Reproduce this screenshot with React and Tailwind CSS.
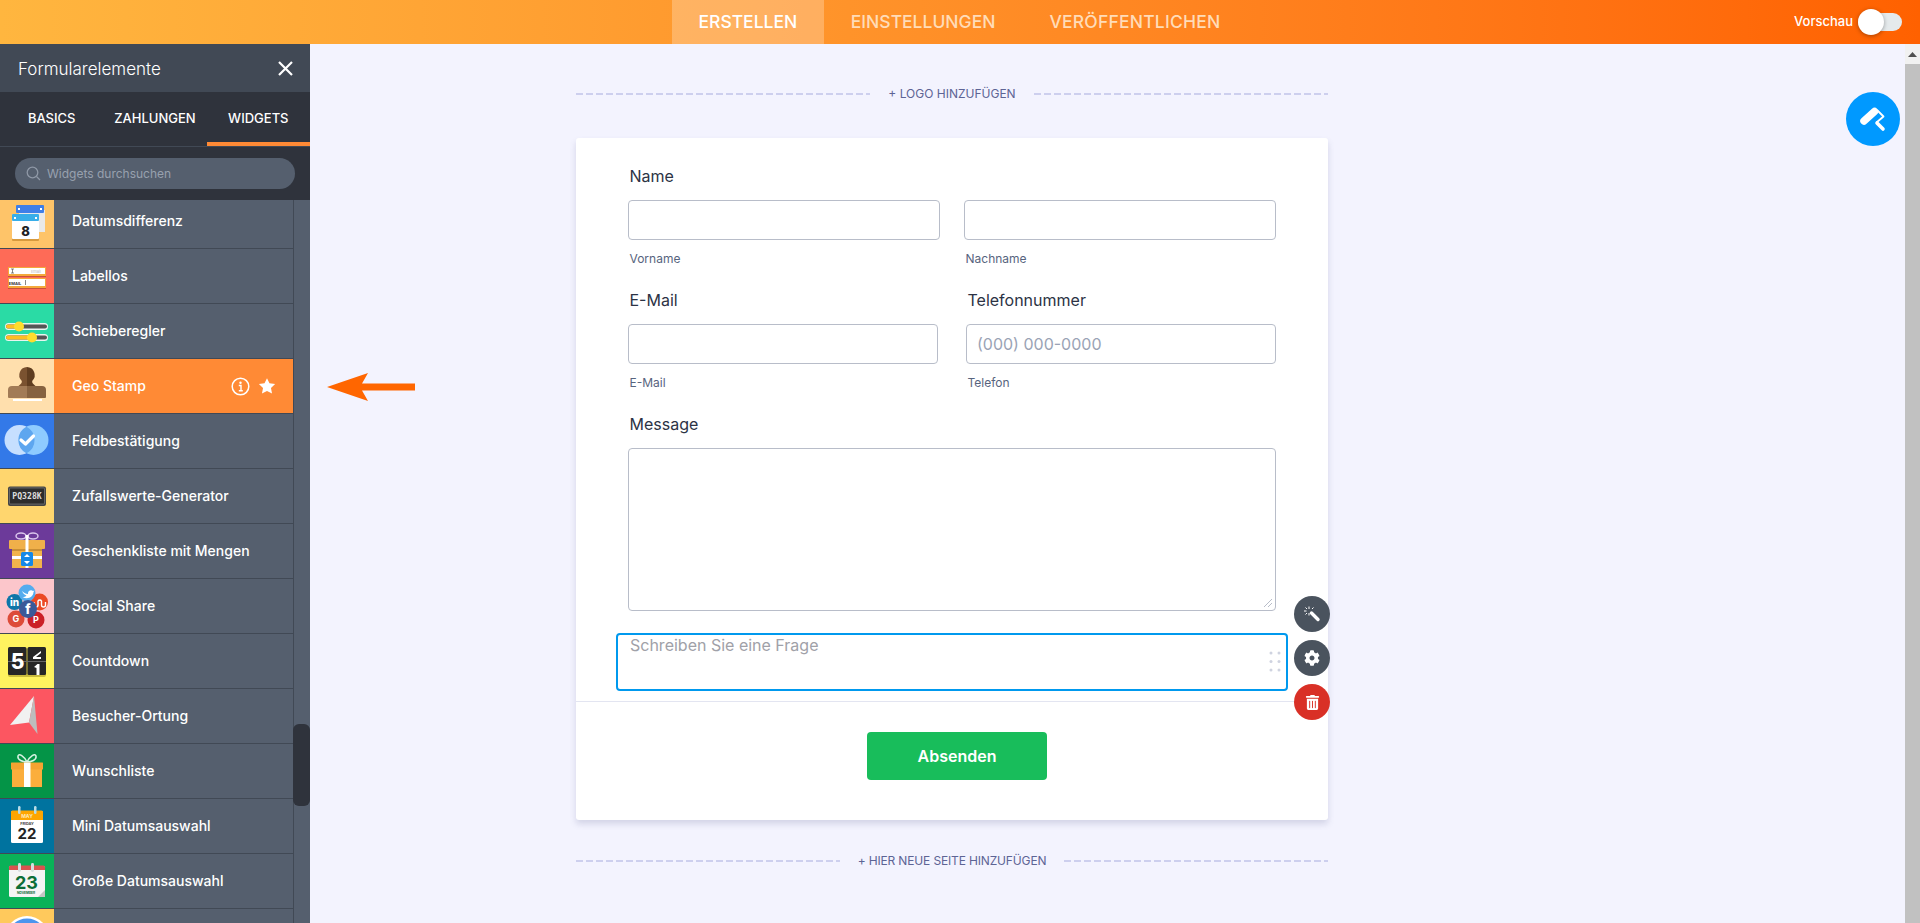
import React from "react";
import { FaCog, FaTrashAlt } from "react-icons/fa";

const Svg = ({ children }) => (
  <svg width="54" height="54" viewBox="0 0 54 54" className="-mt-px block">{children}</svg>
);

const IconDate = () => (
  <Svg>
    <rect x="19" y="17" width="26" height="22" fill="#e9e9e9" />
    <rect x="16" y="12" width="28" height="8" rx="1" fill="#3f7fe8" />
    <rect x="18" y="15" width="2" height="2" fill="#fff" />
    <rect x="40" y="15" width="2" height="2" fill="#fff" />
    <rect x="12" y="21" width="27" height="27" rx="1" fill="#d79a3e" />
    <rect x="12" y="21" width="27" height="25" rx="1" fill="#fff" />
    <rect x="12" y="21" width="27" height="7" rx="1" fill="#38aee9" />
    <rect x="14" y="24" width="2" height="2" fill="#fff" />
    <rect x="35" y="24" width="2" height="2" fill="#fff" />
    <text x="25.5" y="43" textAnchor="middle" fontSize="13" fontWeight="800" fill="#222" fontFamily="Inter, sans-serif">8</text>
  </Svg>
);

const IconLabel = () => (
  <Svg>
    <rect x="8" y="19" width="38" height="9" fill="#f4a83a" />
    <rect x="9" y="20" width="36" height="6" fill="#fff" />
    <rect x="8" y="28" width="38" height="1" fill="#c9503b" />
    <rect x="8" y="30" width="38" height="10" fill="#f4a83a" />
    <rect x="9" y="31" width="36" height="7" fill="#fff" />
    <rect x="8" y="40" width="38" height="1" fill="#c9503b" />
    <path d="M11 21h3M12.500 21v4M11 25h3" stroke="#555" strokeWidth="0.7" fill="none" />
    <text x="36" y="25" textAnchor="middle" fontSize="4" fill="#bbb" fontFamily="Inter, sans-serif">Email</text>
    <text x="15" y="36.500" textAnchor="middle" fontSize="4" fontWeight="700" fill="#333" fontFamily="Inter, sans-serif">EMAIL</text>
    <rect x="25" y="32" width="0.7" height="5" fill="#555" />
  </Svg>
);

const IconSlider = () => (
  <Svg>
    <rect x="5" y="20" width="43" height="7" rx="3.500" fill="#e8f5f0" />
    <rect x="6" y="21.500" width="41" height="4" rx="2" fill="#555" />
    <rect x="6" y="21.500" width="14" height="4" rx="2" fill="#ffbe22" />
    <circle cx="19" cy="23.500" r="5" fill="#ffdc2e" />
    <rect x="5" y="31" width="43" height="7" rx="3.500" fill="#e8f5f0" />
    <rect x="6" y="32.500" width="41" height="4" rx="2" fill="#555" />
    <rect x="6" y="32.500" width="27" height="4" rx="2" fill="#ffbe22" />
    <circle cx="32" cy="34.500" r="5" fill="#ffdc2e" />
  </Svg>
);

const IconGeo = () => (
  <Svg>
    <path d="M27 9a8 8 0 0 0-5.500 13.500c1 1.500 0 3-3 5.500h8.500z" fill="#7a5230" />
    <path d="M27 9a8 8 0 0 1 5.500 13.500c-1 1.500 0 3 3 5.500h-8.500z" fill="#5f3d20" />
    <path d="M27 28H12q-4 0-4 4v7q0 1 1 1h18z" fill="#a27b56" />
    <path d="M27 28h15q4 0 4 4v7q0 1-1 1H27z" fill="#866240" />
    <rect x="13" y="41" width="29" height="2" fill="#fff" />
  </Svg>
);

const IconField = () => (
  <Svg>
    <circle cx="19.500" cy="27" r="15" fill="#c6dfff" />
    <circle cx="33.500" cy="27" r="15" fill="#8ecbff" />
    <path d="M26.500 13.700a15 15 0 0 1 0 26.600a15 15 0 0 1 0-26.600z" fill="#5ea6ef" />
    <path d="M21 27l4.500 4 8-8" stroke="#fff" strokeWidth="3.200" fill="none" strokeLinecap="round" strokeLinejoin="round" />
  </Svg>
);

const IconRandom = () => (
  <Svg>
    <rect x="8" y="18.500" width="38" height="19.500" rx="2" fill="#444" />
    <rect x="9.500" y="20" width="35" height="16" rx="1" fill="#2d2d2d" stroke="#888" strokeWidth="0.6" />
    <text x="27" y="31" textAnchor="middle" fontSize="8.200" fontWeight="700" fill="#ddd" fontFamily="'DejaVu Sans Mono', monospace">PQ328K</text>
  </Svg>
);

const IconGift = () => (
  <Svg>
    <ellipse cx="21" cy="13" rx="5" ry="3" fill="none" stroke="#d9c4ec" strokeWidth="1.500" />
    <ellipse cx="33" cy="13" rx="5" ry="3" fill="none" stroke="#d9c4ec" strokeWidth="1.500" />
    <rect x="9" y="17" width="36" height="9" rx="1" fill="#f0b04a" />
    <rect x="12" y="26" width="30" height="19" fill="#f2b34c" />
    <rect x="12" y="26" width="30" height="2" fill="#c98f35" />
    <rect x="12" y="33" width="30" height="3" fill="#fff" />
    <rect x="25.500" y="12" width="3" height="33" fill="#fff" />
    <rect x="21" y="29" width="12" height="14" rx="1.500" fill="#1688e8" />
    <path d="M27 31l3 3h-6zM27 41l3-3h-6z" fill="#fff" />
  </Svg>
);

const IconSocial = () => (
  <Svg>
    <circle cx="16" cy="41" r="8.500" fill="#dd4b39" />
    <text x="16" y="44" textAnchor="middle" fontSize="9" fontWeight="700" fill="#fff" fontFamily="Inter, sans-serif">G</text>
    <circle cx="36" cy="42" r="8.500" fill="#cb2027" />
    <text x="36" y="45" textAnchor="middle" fontSize="9" fontWeight="700" fill="#fff" fontFamily="Inter, sans-serif">P</text>
    <circle cx="14.500" cy="24" r="8" fill="#0e76a8" />
    <text x="14.500" y="28" textAnchor="middle" fontSize="10" fontWeight="800" fill="#fff" fontFamily="Inter, sans-serif">in</text>
    <circle cx="39.500" cy="24" r="8.500" fill="#eb4924" />
    <path d="M34 24v3a2 2 0 0 0 4 0v-4a2 2 0 0 1 3.500 0v4a2 2 0 0 0 4 0v-3" stroke="#fff" strokeWidth="1.400" fill="none" />
    <circle cx="27" cy="15" r="8.500" fill="#55acee" />
    <path d="M22 13c2 2 4 3 6 3c-.5-3 3-5 5-3l1.500-.5l-1 1.500c0 5-6 8-11 5c2 0 3-.5 4-1.500c-2-.5-4-3-4.500-4.500z" fill="#fff" />
    <circle cx="28" cy="31" r="9" fill="#3b5998" />
    <text x="28" y="36" textAnchor="middle" fontSize="13" fontWeight="800" fill="#fff" fontFamily="Inter, sans-serif">f</text>
  </Svg>
);

const IconCountdown = () => (
  <Svg>
    <rect x="8" y="16" width="38" height="28" rx="2" fill="#c9bb3c" />
    <rect x="8" y="14" width="18.500" height="28" rx="1.500" fill="#262626" />
    <rect x="27.500" y="14" width="18.500" height="28" rx="1.500" fill="#262626" />
    <rect x="8" y="28" width="38" height="1" fill="#666" />
    <text x="17.500" y="36" textAnchor="middle" fontSize="21" fontWeight="800" fill="#fff" fontFamily="Inter, sans-serif">5</text>
    <path d="M33 24l8-6v2l-5 4h5v2h-8z" fill="#fff" />
    <path d="M34 34l3.500-3h2v11h-3v-7z" fill="#fff" />
  </Svg>
);

const IconVisitor = () => (
  <Svg>
    <path d="M34 8L10 37L29 34.500z" fill="#f1f1f1" />
    <path d="M34 8L29 34.500L37.500 46z" fill="#bdbdbd" />
  </Svg>
);

const IconWish = () => (
  <Svg>
    <path d="M27 19c-3-6-8-9-9-6c-1 4 5 6 9 6zM27 19c3-6 8-9 9-6c1 4-5 6-9 6z" fill="none" stroke="#d7f2e2" strokeWidth="1.500" />
    <rect x="12" y="26" width="30" height="19" fill="#128a45" />
    <rect x="12" y="26" width="30" height="18" fill="#fbae3c" />
    <rect x="11" y="19.500" width="32" height="7" rx="0.500" fill="#f5a331" />
    <rect x="24" y="19.500" width="6.500" height="24.500" fill="#fff" />
  </Svg>
);

const IconMini = () => (
  <Svg>
    <rect x="11" y="13" width="32" height="32" rx="1.500" fill="#fff" />
    <path d="M11 22v-8q0-1.500 1.500-1.500h29q1.500 0 1.500 1.500v8z" fill="#fea500" />
    <rect x="18" y="8" width="2.500" height="8" rx="1.200" fill="#b8dce8" />
    <rect x="34" y="8" width="2.500" height="8" rx="1.200" fill="#b8dce8" />
    <text x="27" y="19.500" textAnchor="middle" fontSize="5" fontWeight="700" fill="#ffe9b8" fontFamily="Inter, sans-serif">MAY</text>
    <text x="27" y="26.500" textAnchor="middle" fontSize="3.800" fontWeight="700" fill="#444" fontFamily="Inter, sans-serif">FRIDAY</text>
    <text x="27" y="40.500" textAnchor="middle" fontSize="15" fontWeight="700" fill="#222" fontFamily="Inter, sans-serif">22</text>
  </Svg>
);

const IconBig = () => (
  <Svg>
    <rect x="9" y="13" width="36" height="31" rx="1.500" fill="#f4f4f4" />
    <path d="M9 17v-3q0-1.500 1.500-1.500h33q1.500 0 1.500 1.500v3z" fill="#d9534f" />
    <rect x="18" y="10" width="3" height="9" rx="1.400" fill="#d7dee0" />
    <rect x="31" y="10" width="3" height="9" rx="1.400" fill="#d7dee0" />
    <text x="26.500" y="36" textAnchor="middle" fontSize="18" fontWeight="700" fill="#0c6e37" fontFamily="Inter, sans-serif">23</text>
    <text x="26" y="40.500" textAnchor="middle" fontSize="3.200" fontWeight="700" fill="#0c6e37" fontFamily="Inter, sans-serif">NOVEMBER</text>
    <path d="M45 37l-7 7h7z" fill="#c4c4c4" />
  </Svg>
);

const IconLast = () => (
  <Svg>
    <circle cx="27" cy="30" r="22" fill="#fff" />
    <circle cx="27" cy="30" r="19.500" fill="#4b95ee" />
  </Svg>
);

const widgets = [
  ["Datumsdifferenz", "bg-[#fec469]", IconDate],
  ["Labellos", "bg-[#fe6b57]", IconLabel],
  ["Schieberegler", "bg-[#2adba5]", IconSlider],
  ["Geo Stamp", "bg-[#ffdfad]", IconGeo, true],
  ["Feldbestätigung", "bg-[#3379e8]", IconField],
  ["Zufallswerte-Generator", "bg-[#ffd66e]", IconRandom],
  ["Geschenkliste mit Mengen", "bg-[#6c3a9a]", IconGift],
  ["Social Share", "bg-[#fcc6cb]", IconSocial],
  ["Countdown", "bg-[#fff35f]", IconCountdown],
  ["Besucher-Ortung", "bg-[#fc5661]", IconVisitor],
  ["Wunschliste", "bg-[#049447]", IconWish],
  ["Mini Datumsauswahl", "bg-[#00739f]", IconMini],
  ["Große Datumsauswahl", "bg-[#0ab258]", IconBig],
  ["", "bg-[#ffc95c]", IconLast],
];

function Row({ name, bg, Icon, active }) {
  return (
    <div className="flex h-[55px] shrink-0 border-b border-[#414955]">
      <div className={`w-[54px] shrink-0 overflow-hidden ${bg}`}>
        <Icon />
      </div>
      <div className={`flex flex-1 items-center pl-[18px] text-[14px] font-medium text-white ${active ? "bg-[#ff8a35]" : ""}`}>
        <span className="flex-1 pb-[2px]">{name}</span>
        {active && (
          <span className="flex items-center gap-[8px] pr-[17px]">
            <svg width="19" height="19" viewBox="0 0 19 19" fill="none">
              <circle cx="9.500" cy="9.500" r="8.300" stroke="#fff" strokeWidth="1.500" />
              <circle cx="9.500" cy="5.800" r="1.200" fill="#fff" />
              <path d="M7.800 8.500h2.200v5M7.800 13.700h4" stroke="#fff" strokeWidth="1.400" />
            </svg>
            <svg width="18" height="18" viewBox="0 0 24 24" fill="#fff">
              <path d="M12 1.500l3.300 6.900 7.500 1-5.500 5.200 1.400 7.500L12 18.500l-6.700 3.600 1.400-7.500L1.200 9.400l7.500-1z" />
            </svg>
          </span>
        )}
      </div>
    </div>
  );
}

function Sidebar() {
  return (
    <aside className="flex w-[310px] shrink-0 flex-col bg-[#555f6e]">
      <div className="flex h-[48px] shrink-0 items-center justify-between bg-[#414955] pl-[18px] pr-[16px] pt-[1px]">
        <span className="pt-[2px] text-[17px] font-light text-white">Formularelemente</span>
        <svg width="17" height="17" viewBox="0 0 17 17" stroke="#fff" strokeWidth="2.200">
          <path d="M2 2l13 13M15 2L2 15" />
        </svg>
      </div>
      <div className="flex h-[55px] shrink-0 border-b border-[#414955] bg-[#2f333c] text-[13px] font-medium text-white">
        <div className="flex flex-1 items-center justify-center">BASICS</div>
        <div className="flex flex-1 items-center justify-center">ZAHLUNGEN</div>
        <div className="flex flex-1 items-center justify-center border-b-4 border-[#ff8a35] pt-[4px]">WIDGETS</div>
      </div>
      <div className="flex h-[53px] shrink-0 items-center bg-[#2f333c] pl-[15px] pr-[15px]">
        <div className="flex h-[31px] w-full items-center gap-[6px] rounded-full bg-[#555f6e] pl-[11px] text-[12px] text-[#98a1ae]">
          <svg width="15" height="15" viewBox="0 0 15 15" fill="none" stroke="#8f98a6" strokeWidth="1.300">
            <circle cx="6.500" cy="6.500" r="5.300" />
            <path d="M10.500 10.500l3.500 3.500" />
          </svg>
          <span>Widgets durchsuchen</span>
        </div>
      </div>
      <div className="flex min-h-0 flex-1">
        <div className="w-[293px] shrink-0 overflow-hidden">
          <div className="-mt-[6px] flex flex-col">
            {widgets.map(([name, bg, Icon, active], i) => (
              <Row key={i} name={name} bg={bg} Icon={Icon} active={active} />
            ))}
          </div>
        </div>
        <div className="flex-1 border-l border-[#414955] pt-[524px]">
          <div className="-ml-px h-[82px] rounded-[6px] bg-[#2f333c]" />
        </div>
      </div>
    </aside>
  );
}

const Dash = () => (
  <div className="h-[2px] flex-1 bg-[repeating-linear-gradient(90deg,#cdcfee_0,#cdcfee_7px,transparent_7px,transparent_10px)]" />
);

const Divider = ({ children, className = "" }) => (
  <div className={`flex h-[16px] items-center gap-[18px] text-[12px] leading-[16px] text-[#5d6495] ${className}`}>
    <Dash />
    <span>{children}</span>
    <Dash />
  </div>
);

const Label = ({ children, className = "" }) => (
  <div className={`mb-[12px] pl-[1.500px] text-[16px] leading-[24px] text-[#2c3345] ${className}`}>{children}</div>
);
const Sub = ({ children }) => (
  <div className="mt-[11px] pl-[1.500px] text-[12px] leading-[16px] text-[#57647e]">{children}</div>
);
const Input = ({ placeholder }) => (
  <div className="flex h-[40px] items-center rounded-[4px] border border-[#b8bdc9] bg-white pl-[10px] text-[16px] text-[#9aa3b5]">
    {placeholder}
  </div>
);

const Fab = ({ className, children }) => (
  <div className={`flex h-[36px] w-[36px] items-center justify-center rounded-full text-white ${className}`}>{children}</div>
);

function Form() {
  return (
    <div className="relative rounded-[3px] bg-white shadow-[0_4px_6px_rgba(87,90,140,0.2)]">
      <div className="px-[52px] pt-[26px]">
        <Label>Name</Label>
        <div className="flex gap-[24px]">
          <div className="flex-1">
            <Input />
            <Sub>Vorname</Sub>
          </div>
          <div className="flex-1">
            <Input />
            <Sub>Nachname</Sub>
          </div>
        </div>
        <div className="mt-[21px] flex gap-[28px]">
          <div className="flex-1">
            <Label>E-Mail</Label>
            <Input />
            <Sub>E-Mail</Sub>
          </div>
          <div className="flex-1">
            <Label>Telefonnummer</Label>
            <Input placeholder="(000) 000-0000" />
            <Sub>Telefon</Sub>
          </div>
        </div>
        <Label className="mt-[21px]">Message</Label>
        <div className="flex h-[163px] items-end justify-end rounded-[4px] border border-[#b8bdc9] p-[2px]">
          <svg width="10" height="10" viewBox="0 0 10 10" stroke="#b8bdc9" strokeWidth="1">
            <path d="M1 9l8-8M5 9l4-4" />
          </svg>
        </div>
      </div>
      <div className="mx-[40px] mt-[22px] flex h-[58px] justify-between rounded-[4px] border-2 border-[#0099ee] pl-[12px] pr-[5px] text-[16px] leading-[24px] text-[#a0a1a8]">
        <span className="-mt-[2px]">Schreiben Sie eine Frage</span>
        <svg width="12" height="22" viewBox="0 0 12 22" fill="#cfd3e0" className="mt-[16px]">
          <circle cx="2" cy="2" r="1.500" />
          <circle cx="10" cy="2" r="1.500" />
          <circle cx="2" cy="10.500" r="1.500" />
          <circle cx="10" cy="10.500" r="1.500" />
          <circle cx="2" cy="19" r="1.500" />
          <circle cx="10" cy="19" r="1.500" />
        </svg>
      </div>
      <div className="mt-[10px] h-px bg-[#e3e5f1]" />
      <div className="pb-[40px] pl-[291px] pt-[30px]">
        <div className="flex h-[48px] w-[180px] items-center justify-center rounded-[4px] bg-[#18bd5b] text-[16px] font-semibold text-white">
          Absenden
        </div>
      </div>
      <div className="absolute -right-[2px] top-[458px] flex flex-col gap-[8px]">
        <Fab className="bg-[#4a535e]">
          <svg width="18" height="18" viewBox="0 0 18 18" fill="none" stroke="#fff">
            <path d="M8.500 8l6.500 6.500" strokeWidth="3.400" strokeLinecap="round" />
            <path d="M6 1.500v2.500M6 8v2.500M1 6h2.500M9 4l1.500-1.500M2.500 2.500l1.500 1.500M2.500 9.500l1.500-1.500" strokeWidth="1" />
          </svg>
        </Fab>
        <Fab className="bg-[#4a535e]">
          <FaCog size={16} />
        </Fab>
        <Fab className="bg-[#d93026]">
          <FaTrashAlt size={15} />
        </Fab>
      </div>
    </div>
  );
}

export default function App() {
  return (
    <div className="relative flex h-[923px] w-full flex-col overflow-hidden bg-[#f3f3fe] font-['Inter',sans-serif]">
      <header className="flex h-[44px] shrink-0 items-stretch bg-gradient-to-r from-[#ffb63f] to-[#ff6100]">
        <div className="w-[672px] shrink-0" />
        <nav className="flex text-[17.500px] font-medium text-[#ffdcb8]">
          <div className="flex items-center bg-[#ffffff40] px-[26.500px] text-white">ERSTELLEN</div>
          <div className="flex items-center px-[27px]">EINSTELLUNGEN</div>
          <div className="flex items-center px-[27px] tracking-[0.2px]">VERÖFFENTLICHEN</div>
        </nav>
        <div className="flex flex-1 items-center justify-end pr-[18px]">
          <span className="mr-[5px] text-[13px] font-medium text-white">Vorschau</span>
          <div className="relative h-[18px] w-[44px] rounded-full bg-[#e5eaec]">
            <div className="absolute -top-[4px] left-0 h-[26px] w-[26px] rounded-full bg-white shadow-[0_1px_4px_rgba(0,0,0,0.35)]" />
          </div>
        </div>
      </header>
      <div className="flex min-h-0 flex-1">
        <Sidebar />
        <main className="relative min-w-0 flex-1 pl-[266px] pt-[42px]">
          <div className="w-[752px]">
            <Divider>+ LOGO HINZUFÜGEN</Divider>
            <div className="mt-[36px]">
              <Form />
            </div>
            <div className="mt-[33px]">
              <Divider className="tracking-[-0.15px]">+ HIER NEUE SEITE HINZUFÜGEN</Divider>
            </div>
          </div>
          <div className="absolute left-[1536px] top-[48px] flex h-[54px] w-[54px] items-center justify-center rounded-full bg-[#0099ff]">
            <svg width="26" height="26" viewBox="0 0 26 26" fill="none">
              <path d="M4 15L14.500 5.500" stroke="#fff" strokeWidth="7.500" strokeLinecap="round" />
              <path d="M17 4l6.500 6.500l-7 6" stroke="#fff" strokeWidth="1.800" strokeLinejoin="round" />
              <path d="M17 17l6 6" stroke="#fff" strokeWidth="3.600" strokeLinecap="round" />
            </svg>
          </div>
        </main>
        <div className="flex w-[15px] shrink-0 flex-col bg-[#f1f1f1]">
          <div className="flex h-[20px] shrink-0 items-center justify-center">
            <svg width="9" height="5" viewBox="0 0 9 5" fill="#505050">
              <path d="M4.500 0L9 5H0z" />
            </svg>
          </div>
          <div className="flex-1 bg-[#c1c1c1]" />
        </div>
      </div>
      <svg width="88" height="28" viewBox="0 0 88 28" className="absolute left-[327px] top-[373px]" fill="#ff6600">
        <path d="M0 14L41 0L35 10.500H88V17.500H35L41 28z" />
      </svg>
    </div>
  );
}
